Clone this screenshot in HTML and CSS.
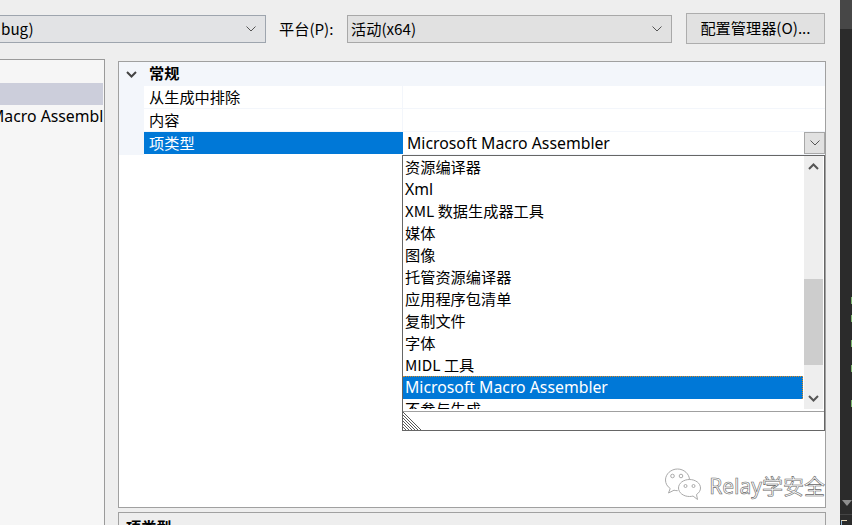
FILE: index.html
```html
<!DOCTYPE html>
<html lang="zh">
<head>
<meta charset="utf-8">
<title>属性页</title>
<link rel="stylesheet" href="styles.css">
</head>
<body>
<div class="dialog">
  <div class="toolbar">
    <div class="combo combo-config"><span class="combo-text">bug)</span><svg class="chev" viewBox="0 0 10 6"><path d="M.5.5 5 5 9.500.5"/></svg></div>
    <span class="plat-label">平台(P):</span>
    <div class="combo combo-plat"><span class="combo-text">活动(x64)</span><svg class="chev" viewBox="0 0 10 6"><path d="M.5.5 5 5 9.500.5"/></svg></div>
    <button class="mgr">配置管理器(O)...</button>
  </div>
  <div class="main">
    <div class="tree">
      <div class="tree-sel"></div>
      <div class="tree-item"><span class="tree-text">Macro Assembler</span></div>
    </div>
    <div class="right">
      <div class="grid">
        <div class="cat"><svg class="cat-chev" viewBox="0 0 11 7"><path d="M1 1l4.500 4.500L10 1"/></svg><span class="cat-text">常规</span></div>
        <div class="row"><div class="gutter"></div><div class="name">从生成中排除</div><div class="val"></div></div>
        <div class="row"><div class="gutter"></div><div class="name">内容</div><div class="val"></div></div>
        <div class="row row-sel"><div class="gutter"></div><div class="name name-sel">项类型</div><div class="val val-sel">Microsoft Macro Assembler<span class="drop-btn"><svg class="chev" viewBox="0 0 10 6"><path d="M.5.5 5 5 9.500.5"/></svg></span></div></div>

        <div class="popup">
          <div class="popup-body">
            <div class="list">
              <div class="opt">资源编译器</div>
              <div class="opt latin">Xml</div>
              <div class="opt">XML 数据生成器工具</div>
              <div class="opt">媒体</div>
              <div class="opt">图像</div>
              <div class="opt">托管资源编译器</div>
              <div class="opt">应用程序包清单</div>
              <div class="opt">复制文件</div>
              <div class="opt">字体</div>
              <div class="opt">MIDL 工具</div>
              <div class="opt opt-sel latin">Microsoft Macro Assembler</div>
              <div class="opt">不参与生成</div>
            </div>
            <div class="sb">
              <svg class="sb-arrow" viewBox="0 0 11 7"><path d="M1 6l4.500-4.500L10 6"/></svg>
              <svg class="sb-arrow" viewBox="0 0 11 7"><path d="M1 1l4.500 4.500L10 1"/></svg>
              <div class="sb-thumb"></div>
            </div>
          </div>
          <div class="grip">
            <svg class="grip-ico" width="21" height="19" viewBox="0 0 21 19"><path d="M0 0l20 20M0 3l17 17M0 6l14 14M0 9l11 11M0 12l8 8M0 15l5 5"/></svg>
          </div>
        </div>
        <div class="mark">
          <svg class="mark-ico" width="36" height="32" viewBox="0 0 36 32">
            <path d="M24.500 12C24.500 6 19 1 12.500 1S.5 6 .5 12c0 3.500 1.800 6.500 4.700 8.500L3.500 25l5.500-2.800c1.200.3 2.400.5 3.700.5"/>
            <path class="bubble-front" d="M35.500 20c0-4.800-5-8.500-11-8.500s-11 3.700-11 8.500 5 8.500 11 8.500c1.200 0 2.400-.1 3.500-.5l4.500 3.500-1-5c2.400-1.500 4-3.800 4-6.500Z"/>
            <circle cx="7.500" cy="8" r="1.800"/><circle cx="16" cy="8" r="1.800"/><circle cx="20.500" cy="18" r="1.500"/><circle cx="28.500" cy="18" r="1.500"/>
          </svg>
          <span class="mark-text">Relay学安全</span>
        </div>
      </div>
      <div class="desc"><span class="desc-title">项类型</span></div>
    </div>
  </div>
</div>
<div class="backdrop">
  <div class="scroll-down"></div>
  <div class="corner"></div>
</div>
</body>
</html>
```
FILE: styles.css
```css
* { box-sizing: border-box; }
html, body { margin: 0; height: 100%; overflow: hidden; }
body { display: flex; width: 852px; height: 525px; background: #2d2d2d; font-family: "Noto Sans CJK SC", "Noto Sans", sans-serif; font-size: 15.2px; color: #000; }
.dialog { width: 840px; height: 525px; background: #eeeeee; flex: none; overflow: hidden; }
.backdrop {
  position: relative;
  flex: 1;
  background:
    linear-gradient(#7cb56f, #7cb56f) 100% 297px / 1px 7px no-repeat,
    linear-gradient(#7cb56f, #7cb56f) 100% 315px / 1px 7px no-repeat,
    linear-gradient(#7cb56f, #7cb56f) 100% 340px / 1px 7px no-repeat,
    linear-gradient(#7cb56f, #7cb56f) 100% 365px / 1px 7px no-repeat,
    linear-gradient(#7cb56f, #7cb56f) 100% 400px / 1px 7px no-repeat,
    linear-gradient(#444, #444) 0 514px / 100% 1px no-repeat,
    linear-gradient(#474747 0 29px, #2b2b2b 29px);
}
.scroll-down { position: absolute; left: 2px; top: 500px; border-left: 5px solid transparent; border-right: 5px solid transparent; border-top: 6px solid #8e8e8e; }
.corner { position: absolute; left: 1px; top: 520px; width: 6px; height: 6px; border-left: 1px solid #8fb7d8; border-top: 1px solid #e8d8b8; }
.toolbar { display: flex; align-items: center; height: 31px; margin-top: 13px; margin-left: -1px; }
.combo { display: flex; align-items: center; justify-content: space-between; height: 28px; background: #e2e3e5; border: 1px solid #9ea5ae; padding: 0 9px 0 1px; }
.combo-config { width: 267px; }
.combo-plat { width: 325px; background: #e1e1e1; border-color: #a8a8a8; padding-left: 3px; }
.combo-text { line-height: 24px; padding-bottom: 2px; }
.plat-label { margin-left: 13px; width: 68px; flex: none; padding-bottom: 2px; }
.chev { width: 10px; height: 6px; fill: none; stroke: #555; stroke-width: 1; flex: none; }
.mgr { height: 31px; width: 139px; margin-left: 14px; background: #e1e1e1; border: 1px solid #adadad; font: inherit; color: #000; padding: 0 0 3px; white-space: nowrap; }
.main { display: flex; gap: 13px; margin-top: 15px; height: 470px; }
.tree { width: 105px; height: 470px; background: #f6f6f6; border: 1px solid #9a9a9a; border-left: none; padding-top: 23px; overflow: hidden; }
.tree-sel { height: 22px; width: 103px; background: #cccedb; }
.tree-item { white-space: nowrap; height: 22px; line-height: 22px; width: 103px; overflow: hidden; font-family: "Noto Sans", sans-serif; font-size: 15.8px; }
.tree-text { display: inline-block; margin-left: -10px; }
.right { width: 708px; margin-top: 2px; display: flex; flex-direction: column; gap: 4px; }
.grid { position: relative; height: 447px; flex: none; background: #fff; border: 1px solid #a0a0a0; }
.cat { display: flex; align-items: center; height: 24px; background: #f3f6fb; font-weight: 700; }
.cat-chev { width: 11px; height: 7px; margin-left: 7px; fill: none; stroke: #444; stroke-width: 2; flex: none; }
.cat-text { margin-left: 12px; line-height: 20px; padding-bottom: 4px; height: 24px; }
.row { display: flex; height: 23px; background: #fff; }
.gutter { width: 25px; background: #f3f6fb; flex: none; }
.name { width: 259px; flex: none; padding-left: 5px; line-height: 20px; border-right: 1px solid #f3f6fb; border-bottom: 1px solid #f3f6fb; }
.val { flex: 1; border-bottom: 1px solid #f3f6fb; }
.name-sel { background: #0078d7; color: #fff; border: none; height: 22px; }
.val-sel { position: relative; padding-left: 4px; line-height: 22px; font-family: "Noto Sans", sans-serif; font-size: 15.8px; }
.drop-btn { position: absolute; right: 0; top: 0; width: 21px; height: 22px; display: flex; align-items: center; justify-content: center; background: #e1e1e1; border: 1px solid #a8a8a8; }
.popup { position: absolute; left: 283px; top: 93px; width: 423px; height: 276px; background: #fff; border: 1px solid #666; display: flex; flex-direction: column; }
.popup-body { position: relative; display: flex; gap: 1px; height: 256px; border-bottom: 1px solid #a0a0a0; flex: none; }
.list { width: 400px; flex: none; overflow: hidden; height: 253px; }
.opt { height: 22px; line-height: 20px; padding-left: 2px; white-space: nowrap; }
.latin { line-height: 22px; font-family: "Noto Sans", sans-serif; font-size: 15.8px; }
.opt-sel { background: #0078d7; color: #fff; height: 23px; border-top: 1px dotted #e08a20; border-right: 1px dotted #e08a20; margin-bottom: -1px; line-height: 21px; }
.sb { position: relative; width: 19px; height: 253px; background: #eeeeee; display: flex; flex-direction: column; align-items: center; justify-content: space-between; padding: 7px 0; }
.sb-arrow { width: 11px; height: 7px; fill: none; stroke: #555; stroke-width: 2; flex: none; }
.sb-thumb { position: absolute; left: 0; top: 123px; width: 19px; height: 86px; background: #cdcdcd; }
.grip { height: 19px; overflow: hidden; }
.grip-ico { display: block; fill: none; stroke: #444; stroke-width: .9; }
.mark { position: absolute; right: 0; bottom: 7px; display: flex; align-items: center; gap: 8px; }
.mark-ico { fill: none; stroke: #aaa; stroke-width: 1; flex: none; }
.mark-ico .bubble-front { fill: #fff; }
.mark-ico circle { fill: #fff; stroke: #aaa; }
.mark-text { font-family: "Noto Sans", "Noto Sans CJK SC", sans-serif; font-size: 21px; line-height: 28px; padding-top: 4px; color: #fff; -webkit-text-stroke: .6px #666; white-space: nowrap; }
.desc { height: 30px; background: #eeeeee; border: 1px solid #a0a0a0; padding: 3px 7px; line-height: 20px; }
.desc-title { font-weight: 700; }
```
